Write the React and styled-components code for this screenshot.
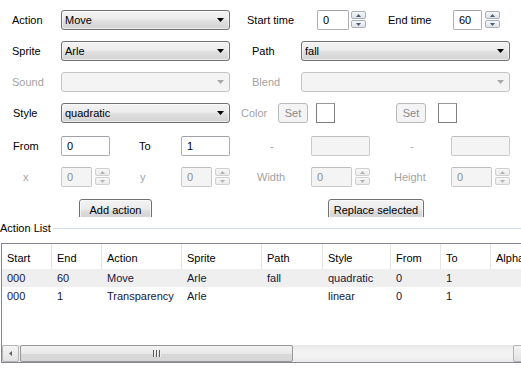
import React from "react";
import styled, { createGlobalStyle } from "styled-components";

const Global = createGlobalStyle`
  html, body { margin: 0; padding: 0; background: #ffffff; overflow: hidden; }
  * { box-sizing: border-box; }
`;

const Page = styled.div`
  width: 521px;
  height: 369px;
  overflow: hidden;
  padding-top: 10px;
  font-family: "Liberation Sans", Arial, sans-serif;
  font-size: 11px;
  color: #000;
  background: #fff;
`;

const Row = styled.div`
  display: flex;
  align-items: flex-start;
  height: ${(p) => p.$h || 20}px;
  margin-top: ${(p) => p.$mt || 0}px;
  padding-left: ${(p) => p.$pl || 0}px;
  overflow: ${(p) => (p.$clip ? "hidden" : "visible")};
`;

const Label = styled.div`
  flex: none;
  width: ${(p) => p.$w}px;
  padding-left: ${(p) => p.$pl}px;
  height: 20px;
  line-height: 20px;
  white-space: nowrap;
  color: ${(p) => (p.$disabled ? "#a3a3a3" : "#000")};
`;

const Combo = styled.div`
  flex: none;
  width: ${(p) => p.$w}px;
  height: 20px;
  display: flex;
  align-items: center;
  justify-content: space-between;
  padding: 0 5px 0 3px;
  border: 1px solid ${(p) => (p.$disabled ? "#c2c4c6" : "#707070")};
  border-radius: 3px;
  background: ${(p) =>
    p.$disabled
      ? "#f4f4f4"
      : "linear-gradient(#f3f3f3 0%, #ececec 45%, #dfdfdf 55%, #d3d3d3 100%)"};
  box-shadow: ${(p) => (p.$disabled ? "none" : "inset 0 0 0 1px rgba(255,255,255,0.55)")};
  color: #000;
`;

const Arrow = ({ color }) => (
  <svg width="7" height="4" viewBox="0 0 7 4">
    <path d="M0 0 L7 0 L3.5 4 Z" fill={color} />
  </svg>
);

const Input = styled.div`
  flex: none;
  width: ${(p) => p.$w}px;
  height: 20px;
  padding-left: 5px;
  line-height: 18px;
  border: 1px solid ${(p) => (p.$disabled ? "#c9cacc" : "#abadb3")};
  border-top-color: ${(p) => (p.$disabled ? "#bdbec0" : "#a0a2a8")};
  border-radius: 2px;
  background: ${(p) => (p.$disabled ? "#f4f4f4" : "#fff")};
  color: ${(p) => (p.$disabled ? "#8c8c8c" : "#000")};
`;

const SpinCol = styled.div`
  flex: none;
  display: flex;
  flex-direction: column;
  gap: 1px;
  margin-left: ${(p) => p.$gap}px;
  margin-top: 1px;
`;

const SpinBtn = styled.div`
  width: 15px;
  height: 8px;
  display: flex;
  align-items: center;
  justify-content: center;
  border: 1px solid ${(p) => (p.$disabled ? "#d0d0d0" : "#a9afb8")};
  border-radius: 2px;
  background: ${(p) =>
    p.$disabled ? "linear-gradient(#f7f7f7, #ececec)" : "linear-gradient(#f6f8fa, #dfe3e8)"};
`;

const Tri = ({ up, color }) => (
  <svg width="5" height="3" viewBox="0 0 5 3">
    <path d={up ? "M0 3 L5 3 L2.5 0 Z" : "M0 0 L5 0 L2.5 3 Z"} fill={color} />
  </svg>
);

const SpinBox = ({ w, gap = 2, value, disabled }) => {
  const c = disabled ? "#b3b3b3" : "#4a5a70";
  return (
    <>
      <Input $w={w} $disabled={disabled}>{value}</Input>
      <SpinCol $gap={gap}>
        <SpinBtn $disabled={disabled}><Tri up color={c} /></SpinBtn>
        <SpinBtn $disabled={disabled}><Tri color={c} /></SpinBtn>
      </SpinCol>
    </>
  );
};

const Button = styled.div`
  flex: none;
  width: ${(p) => p.$w}px;
  height: ${(p) => p.$h || 22}px;
  margin-left: ${(p) => p.$ml || 0}px;
  display: flex;
  align-items: center;
  justify-content: center;
  border: 1px solid ${(p) => (p.$disabled ? "#b8bbbd" : "#707070")};
  border-radius: 3px;
  background: ${(p) =>
    p.$disabled
      ? "#f4f4f4"
      : "linear-gradient(#f3f3f3 0%, #ebebeb 45%, #dddddd 55%, #cfcfcf 100%)"};
  box-shadow: ${(p) => (p.$disabled ? "none" : "inset 0 0 0 1px rgba(255,255,255,0.6)")};
  color: ${(p) => (p.$disabled ? "#8a8a8a" : "#000")};
  white-space: nowrap;
`;

const Swatch = styled.div`
  flex: none;
  width: 19px;
  height: 20px;
  margin-left: ${(p) => p.$ml}px;
  background: #fff;
  border: 1px solid #7e7e7e;
  border-top-color: #9a9a9a;
`;

const GroupTitle = styled.div`
  display: flex;
  align-items: center;
  gap: 2px;
  height: 11px;
  line-height: 11px;
  margin-top: 6px;
  white-space: nowrap;
  &::after {
    content: "";
    flex: 1;
    height: 1px;
    background: #d5dfe5;
  }
`;

const Table = styled.div`
  width: 530px;
  height: 120px;
  margin-top: 9px;
  margin-left: 1px;
  border: 1px solid #828790;
  display: flex;
  flex-direction: column;
  background: #fff;
`;

const COLS = "50px 50px 80px 80px 61px 68px 50px 50px 100px";

const HeaderRow = styled.div`
  display: grid;
  grid-template-columns: ${COLS};
  height: 25px;
  flex: none;
`;

const HeaderCell = styled.div`
  padding: 4px 0 0 5px;
  line-height: 20px;
  border-right: 1px solid #e5e5e5;
  white-space: nowrap;
  overflow: hidden;
  color: #000;
`;

const DataRow = styled.div`
  display: grid;
  grid-template-columns: ${COLS};
  height: 18px;
  flex: none;
  background: ${(p) => (p.$shaded ? "#efefef" : "#fff")};
`;

const DataCell = styled.div`
  padding-left: 5px;
  line-height: 18px;
  white-space: nowrap;
  overflow: hidden;
  color: #16163a;
`;

const Spacer = styled.div`
  flex: 1;
`;

const HScroll = styled.div`
  flex: none;
  height: 17px;
  display: flex;
  background: linear-gradient(#e6e6e6, #f2f2f2 30%, #f2f2f2 70%, #e9e9e9);
`;

const ScrollBtn = styled.div`
  flex: none;
  width: 17px;
  height: 17px;
  display: flex;
  align-items: center;
  justify-content: center;
  border: 1px solid #b4b4b4;
  border-radius: 2px;
  background: linear-gradient(#f4f4f4, #e2e2e2);
`;

const Thumb = styled.div`
  flex: none;
  width: ${(p) => p.$w}px;
  height: 17px;
  margin-left: 1px;
  display: flex;
  align-items: center;
  justify-content: center;
  gap: 1px;
  border: 1px solid #979797;
  border-radius: 2px;
  background: linear-gradient(#f3f3f3, #e8e8e8 50%, #d9d9d9 51%, #d6d6d6);
`;

const Track = styled.div`
  flex: 1;
`;

const Grip = styled.span`
  width: 1px;
  height: 7px;
  background: #5a5a5a;
  box-shadow: 1px 0 0 #f0f0f0;
  margin-right: 1px;
`;

const ArrowL = () => (
  <svg width="3" height="5" viewBox="0 0 3 5">
    <path d="M3 0 L3 5 L0 2.5 Z" fill="#606060" />
  </svg>
);

const rows = [
  ["000", "60", "Move", "Arle", "fall", "quadratic", "0", "1", ""],
  ["000", "1", "Transparency", "Arle", "", "linear", "0", "1", ""],
];
const headers = ["Start", "End", "Action", "Sprite", "Path", "Style", "From", "To", "Alpha"];

export default function App() {
  return (
    <Page>
      <Global />
      <Row>
        <Label $w={61} $pl={12}>Action</Label>
        <Combo $w={169}>Move<Arrow color="#000" /></Combo>
        <Label $w={87} $pl={17}>Start time</Label>
        <SpinBox w={32} value="0" />
        <Label $w={87} $pl={22}>End time</Label>
        <SpinBox w={29} gap={3} value="60" />
      </Row>
      <Row $mt={11}>
        <Label $w={61} $pl={12}>Sprite</Label>
        <Combo $w={169}>Arle<Arrow color="#000" /></Combo>
        <Label $w={71} $pl={22}>Path</Label>
        <Combo $w={209}>fall<Arrow color="#000" /></Combo>
      </Row>
      <Row $mt={11}>
        <Label $w={61} $pl={12} $disabled>Sound</Label>
        <Combo $w={169} $disabled><span /><Arrow color="#a8a8a8" /></Combo>
        <Label $w={71} $pl={22} $disabled>Blend</Label>
        <Combo $w={209} $disabled><span /><Arrow color="#a8a8a8" /></Combo>
      </Row>
      <Row $mt={11}>
        <Label $w={61} $pl={13}>Style</Label>
        <Combo $w={169}>quadratic<Arrow color="#000" /></Combo>
        <Label $w={48} $pl={11} $disabled>Color</Label>
        <Button $w={30} $h={20} $disabled>Set</Button>
        <Swatch $ml={8} />
        <Button $w={30} $h={20} $ml={61} $disabled>Set</Button>
        <Swatch $ml={12} />
      </Row>
      <Row $mt={13}>
        <Label $w={61} $pl={13}>From</Label>
        <Input $w={49}>0</Input>
        <Label $w={71} $pl={29}>To</Label>
        <Input $w={49}>1</Input>
        <Label $w={81} $pl={40} $disabled>-</Label>
        <Input $w={59} $disabled />
        <Label $w={81} $pl={40} $disabled>-</Label>
        <Input $w={59} $disabled />
      </Row>
      <Row $mt={11}>
        <Label $w={61} $pl={23} $disabled>x</Label>
        <SpinBox w={31} gap={3} value="0" disabled />
        <Label $w={71} $pl={30} $disabled>y</Label>
        <SpinBox w={31} gap={3} value="0" disabled />
        <Label $w={81} $pl={27} $disabled>Width</Label>
        <SpinBox w={41} gap={3} value="0" disabled />
        <Label $w={81} $pl={24} $disabled>Height</Label>
        <SpinBox w={41} gap={3} value="0" disabled />
      </Row>
      <Row $mt={12} $h={18} $pl={79} $clip>
        <Button $w={73}>Add action</Button>
        <Button $w={96} $ml={176}>Replace selected</Button>
      </Row>
      <GroupTitle>Action List</GroupTitle>
      <Table>
        <HeaderRow>
          {headers.map((h) => (
            <HeaderCell key={h}>{h}</HeaderCell>
          ))}
        </HeaderRow>
        {rows.map((r, i) => (
          <DataRow key={i} $shaded={i === 0}>
            {r.map((c, j) => (
              <DataCell key={j}>{c}</DataCell>
            ))}
          </DataRow>
        ))}
        <Spacer />
        <HScroll>
          <ScrollBtn><ArrowL /></ScrollBtn>
          <Thumb $w={273}>
            <Grip />
            <Grip />
            <Grip />
          </Thumb>
          <Track />
          <ScrollBtn />
        </HScroll>
      </Table>
    </Page>
  );
}
